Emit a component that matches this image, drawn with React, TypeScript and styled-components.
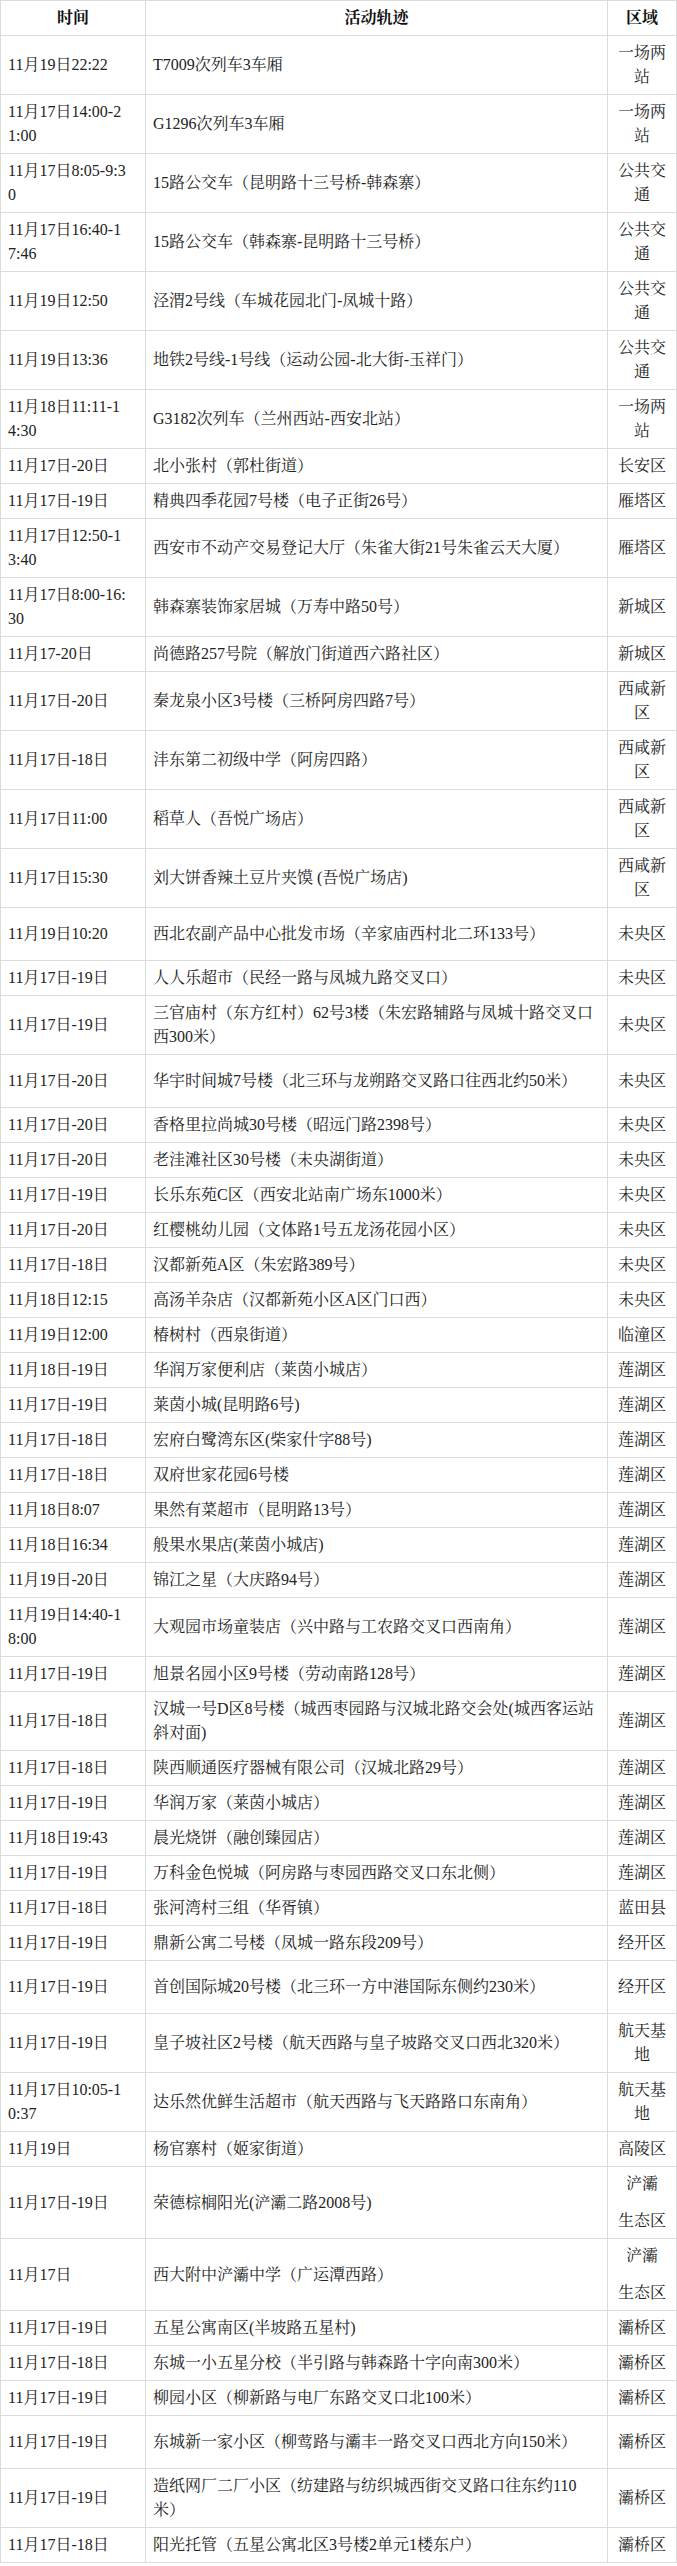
import React from "react";
import styled, { createGlobalStyle } from "styled-components";

const GlobalStyle = createGlobalStyle`
  html, body {
    margin: 0;
    padding: 0;
    background: #ffffff;
  }
  body {
    font-family: "Liberation Serif", "Noto Serif CJK SC", "Noto Sans CJK SC", serif;
    color: #222222;
  }
`;

const Table = styled.div`
  width: 677px;
  box-sizing: border-box;
  border-left: 1px solid #dcdcdc;
  border-top: 1px solid #dcdcdc;
  font-size: 16px;
  line-height: 24px;
`;

const Row = styled.div<{ $h?: number }>`
  display: grid;
  grid-template-columns: 145px 462px 69px;
  border-bottom: 1px solid #dcdcdc;
  min-height: ${(p) => (p.$h ? `${p.$h}px` : "0")};
`;

const Cell = styled.div<{ $center?: boolean }>`
  display: flex;
  align-items: center;
  justify-content: ${(p) => (p.$center ? "center" : "flex-start")};
  text-align: ${(p) => (p.$center ? "center" : "left")};
  padding: 5px ${(p) => (p.$center ? "0px" : "7px")};
  border-right: 1px solid #dcdcdc;
  white-space: pre-line;
`;

const HeadCell = styled(Cell)`
  font-weight: bold;
  color: #111111;
`;

const ZoneLine = styled.span`
  display: block;
  text-align: center;
  white-space: nowrap;
`;

const ZoneStack = styled.div<{ $gap: number }>`
  display: flex;
  flex-direction: column;
  align-items: center;
  justify-content: center;
  width: 100%;
  gap: ${(p) => p.$gap}px;
`;

type Item = { t: string; a: string; z: string; h?: number; gap?: number };

const data: Item[] = [
  { t: "11月19日22:22", a: "T7009次列车3车厢", z: "一场两\n站" },
  { t: "11月17日14:00-2\n1:00", a: "G1296次列车3车厢", z: "一场两\n站" },
  { t: "11月17日8:05-9:3\n0", a: "15路公交车（昆明路十三号桥-韩森寨）", z: "公共交\n通" },
  { t: "11月17日16:40-1\n7:46", a: "15路公交车（韩森寨-昆明路十三号桥）", z: "公共交\n通" },
  { t: "11月19日12:50", a: "泾渭2号线（车城花园北门-凤城十路）", z: "公共交\n通" },
  { t: "11月19日13:36", a: "地铁2号线-1号线（运动公园-北大街-玉祥门）", z: "公共交\n通" },
  { t: "11月18日11:11-1\n4:30", a: "G3182次列车（兰州西站-西安北站）", z: "一场两\n站" },
  { t: "11月17日-20日", a: "北小张村（郭杜街道）", z: "长安区" },
  { t: "11月17日-19日", a: "精典四季花园7号楼（电子正街26号）", z: "雁塔区" },
  { t: "11月17日12:50-1\n3:40", a: "西安市不动产交易登记大厅（朱雀大街21号朱雀云天大厦）", z: "雁塔区" },
  { t: "11月17日8:00-16:\n30", a: "韩森寨装饰家居城（万寿中路50号）", z: "新城区" },
  { t: "11月17-20日", a: "尚德路257号院（解放门街道西六路社区）", z: "新城区" },
  { t: "11月17日-20日", a: "秦龙泉小区3号楼（三桥阿房四路7号）", z: "西咸新\n区" },
  { t: "11月17日-18日", a: "沣东第二初级中学（阿房四路）", z: "西咸新\n区" },
  { t: "11月17日11:00", a: "稻草人（吾悦广场店）", z: "西咸新\n区" },
  { t: "11月17日15:30", a: "刘大饼香辣土豆片夹馍 (吾悦广场店)", z: "西咸新\n区" },
  { t: "11月19日10:20", a: "西北农副产品中心批发市场（辛家庙西村北二环133号）", z: "未央区", h: 52 },
  { t: "11月17日-19日", a: "人人乐超市（民经一路与凤城九路交叉口）", z: "未央区" },
  { t: "11月17日-19日", a: "三官庙村（东方红村）62号3楼（朱宏路辅路与凤城十路交叉口\n西300米）", z: "未央区" },
  { t: "11月17日-20日", a: "华宇时间城7号楼（北三环与龙朔路交叉路口往西北约50米）", z: "未央区", h: 52 },
  { t: "11月17日-20日", a: "香格里拉尚城30号楼（昭远门路2398号）", z: "未央区" },
  { t: "11月17日-20日", a: "老洼滩社区30号楼（未央湖街道）", z: "未央区" },
  { t: "11月17日-19日", a: "长乐东苑C区（西安北站南广场东1000米）", z: "未央区" },
  { t: "11月17日-20日", a: "红樱桃幼儿园（文体路1号五龙汤花园小区）", z: "未央区" },
  { t: "11月17日-18日", a: "汉都新苑A区（朱宏路389号）", z: "未央区" },
  { t: "11月18日12:15", a: "高汤羊杂店（汉都新苑小区A区门口西）", z: "未央区" },
  { t: "11月19日12:00", a: "椿树村（西泉街道）", z: "临潼区" },
  { t: "11月18日-19日", a: "华润万家便利店（莱茵小城店）", z: "莲湖区" },
  { t: "11月17日-19日", a: "莱茵小城(昆明路6号)", z: "莲湖区" },
  { t: "11月17日-18日", a: "宏府白鹭湾东区(柴家什字88号)", z: "莲湖区" },
  { t: "11月17日-18日", a: "双府世家花园6号楼", z: "莲湖区" },
  { t: "11月18日8:07", a: "果然有菜超市（昆明路13号）", z: "莲湖区" },
  { t: "11月18日16:34", a: "般果水果店(莱茵小城店)", z: "莲湖区" },
  { t: "11月19日-20日", a: "锦江之星（大庆路94号）", z: "莲湖区" },
  { t: "11月19日14:40-1\n8:00", a: "大观园市场童装店（兴中路与工农路交叉口西南角）", z: "莲湖区" },
  { t: "11月17日-19日", a: "旭景名园小区9号楼（劳动南路128号）", z: "莲湖区" },
  { t: "11月17日-18日", a: "汉城一号D区8号楼（城西枣园路与汉城北路交会处(城西客运站\n斜对面)", z: "莲湖区" },
  { t: "11月17日-18日", a: "陕西顺通医疗器械有限公司（汉城北路29号）", z: "莲湖区" },
  { t: "11月17日-19日", a: "华润万家（莱茵小城店）", z: "莲湖区" },
  { t: "11月18日19:43", a: "晨光烧饼（融创臻园店）", z: "莲湖区" },
  { t: "11月17日-19日", a: "万科金色悦城（阿房路与枣园西路交叉口东北侧）", z: "莲湖区" },
  { t: "11月17日-18日", a: "张河湾村三组（华胥镇）", z: "蓝田县" },
  { t: "11月17日-19日", a: "鼎新公寓二号楼（凤城一路东段209号）", z: "经开区" },
  { t: "11月17日-19日", a: "首创国际城20号楼（北三环一方中港国际东侧约230米）", z: "经开区", h: 52 },
  { t: "11月17日-19日", a: "皇子坡社区2号楼（航天西路与皇子坡路交叉口西北320米）", z: "航天基\n地" },
  { t: "11月17日10:05-1\n0:37", a: "达乐然优鲜生活超市（航天西路与飞天路路口东南角）", z: "航天基\n地" },
  { t: "11月19日", a: "杨官寨村（姬家街道）", z: "高陵区" },
  { t: "11月17日-19日", a: "荣德棕榈阳光(浐灞二路2008号)", z: "浐灞\n生态区", gap: 13 },
  { t: "11月17日", a: "西大附中浐灞中学（广运潭西路）", z: "浐灞\n生态区", gap: 13 },
  { t: "11月17日-19日", a: "五星公寓南区(半坡路五星村)", z: "灞桥区" },
  { t: "11月17日-18日", a: "东城一小五星分校（半引路与韩森路十字向南300米）", z: "灞桥区" },
  { t: "11月17日-19日", a: "柳园小区（柳新路与电厂东路交叉口北100米）", z: "灞桥区" },
  { t: "11月17日-19日", a: "东城新一家小区（柳莺路与灞丰一路交叉口西北方向150米）", z: "灞桥区", h: 52 },
  { t: "11月17日-19日", a: "造纸网厂二厂小区（纺建路与纺织城西街交叉路口往东约110\n米）", z: "灞桥区" },
  { t: "11月17日-18日", a: "阳光托管（五星公寓北区3号楼2单元1楼东户）", z: "灞桥区" },
];

export default function App() {
  return (
    <>
      <GlobalStyle />
      <Table>
        <Row>
          <HeadCell $center>时间</HeadCell>
          <HeadCell $center>活动轨迹</HeadCell>
          <HeadCell $center>区域</HeadCell>
        </Row>
        {data.map((d, i) => (
          <Row key={i} $h={d.h}>
            <Cell>{d.t}</Cell>
            <Cell>{d.a}</Cell>
            <Cell $center>
              <ZoneStack $gap={d.gap ?? 0}>
                {d.z.split("\n").map((line, j) => (
                  <ZoneLine key={j}>{line}</ZoneLine>
                ))}
              </ZoneStack>
            </Cell>
          </Row>
        ))}
      </Table>
    </>
  );
}
